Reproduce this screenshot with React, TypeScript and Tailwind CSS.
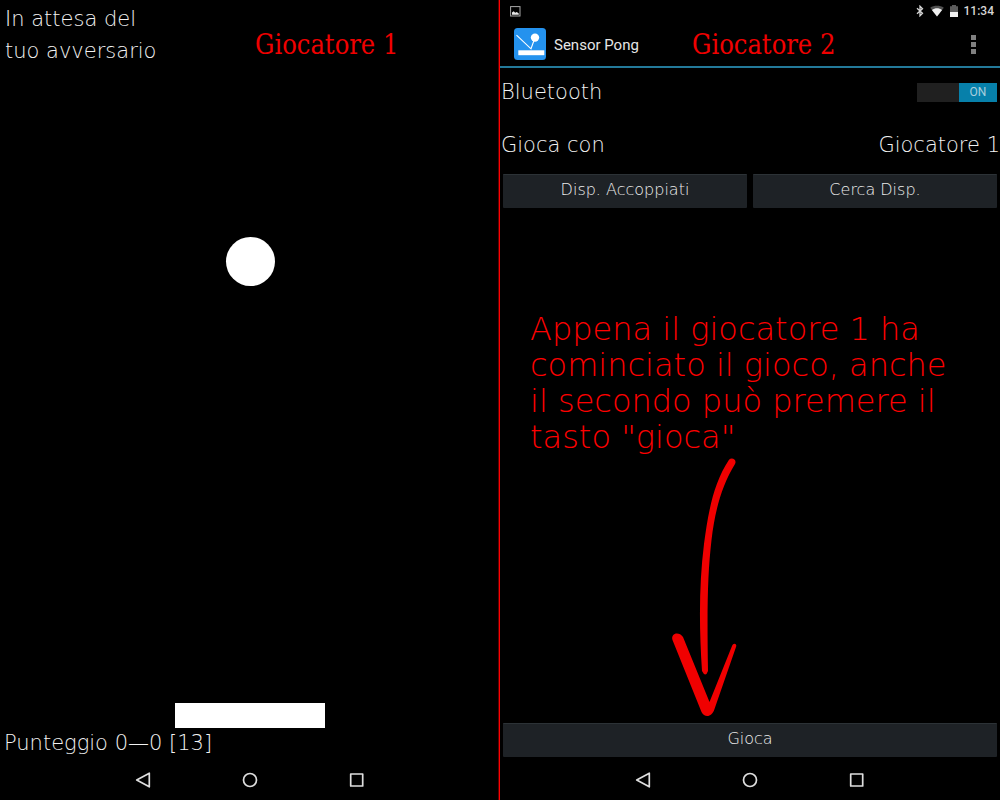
import { useState } from "react";

const hand = "font-['DejaVu_Sans',sans-serif] font-extralight";
const caption =
  "pointer-events-none absolute font-['DejaVu_Serif_Condensed','DejaVu_Serif',serif] font-stretch-condensed text-[27px] leading-8 text-[#f00000] whitespace-nowrap";

function NavBar() {
  return (
    <nav className="flex h-10 shrink-0 items-center justify-center gap-[83px] text-[#dedede]">
      <button type="button" aria-label="Indietro" className="size-6">
        <svg viewBox="0 0 24 24" className="size-6" fill="none" stroke="currentColor" strokeWidth="1.7" strokeLinejoin="round">
          <path d="M18.3 5.2v13.6L5.7 12z" />
        </svg>
      </button>
      <button type="button" aria-label="Home" className="size-6">
        <svg viewBox="0 0 24 24" className="size-6" fill="none" stroke="currentColor" strokeWidth="1.7">
          <circle cx="12" cy="12" r="6.5" />
        </svg>
      </button>
      <button type="button" aria-label="Recenti" className="size-6">
        <svg viewBox="0 0 24 24" className="size-6" fill="none" stroke="currentColor" strokeWidth="1.7" strokeLinejoin="round">
          <rect x="5.7" y="6" width="12" height="12" />
        </svg>
      </button>
    </nav>
  );
}

function PlayerOne() {
  return (
    <section className="relative flex min-h-screen flex-col border-r border-r-[#ff0000] shadow-[inset_-1px_0_0_#600000]">
      <p className={`${hand} pt-[3px] pl-[5px] text-[21px] leading-8`}>
        In attesa del
        <br />
        tuo avversario
      </p>
      <h2 className={`${caption} top-[29px] left-[255px]`}>Giocatore 1</h2>
      <div className="flex flex-1 flex-col items-center justify-between pt-[170px] pl-px">
        <div className="size-[49px] rounded-full bg-white" />
        <div className="h-[25px] w-[150px] bg-white" />
      </div>
      <p className={`${hand} h-8 pl-[4px] text-[21px] leading-[30px]`}>Punteggio 0—0 [13]</p>
      <NavBar />
    </section>
  );
}

function StatusBar() {
  return (
    <div className="flex h-[22px] items-center pr-[6px] pl-[10px] font-['Roboto',sans-serif] text-[12px] leading-5 font-medium text-[#d6d6d6]">
      <svg viewBox="0 0 11 11" className="mr-auto size-[11px]">
        <rect x="0.6" y="0.6" width="9.4" height="9.4" fill="none" stroke="#a8a8a8" strokeWidth="1" />
        <path d="M2 8.8V6.6l1.7-1.3 1.5 1.5L6.8 6l2 1.4v1.4z" fill="#e8e8e8" />
      </svg>
      <svg viewBox="0 0 8 12" className="mr-[6px] h-3 w-2" fill="none" stroke="#d6d6d6" strokeWidth="1.3">
        <path d="M1 3.3l5.5 5L4 10.8V1.2l2.5 2.5L1 8.7" />
      </svg>
      <svg viewBox="0 0 14 12" className="mr-[6px] h-3 w-[14px]">
        <path d="M7 11.5L.2 2.8C4 .2 10 .2 13.8 2.8z" fill="#505050" />
        <path d="M7 11.5L1.9 4.9C5 2.8 9 2.8 12.1 4.9z" fill="#f0f0f0" />
      </svg>
      <svg viewBox="0 0 8 12" className="mr-[6px] h-3 w-2">
        <path d="M0 1.3h2V0h4v1.3h2V7H0z" fill="#5c5c5c" />
        <path d="M0 7h8v5H0z" fill="#f0f0f0" />
      </svg>
      <span>11:34</span>
    </div>
  );
}

function ActionBar() {
  return (
    <header className="relative flex h-[46px] items-center border-b-2 border-[#23799a] pr-[15px] pl-[14px]">
      <svg viewBox="0 0 32 32" className="size-8">
        <rect width="32" height="32" rx="3.5" fill="#2492ee" />
        <path d="M2.5 7.2L17 20.8 20.5 11" fill="none" stroke="#fff" strokeWidth="1.1" />
        <circle cx="21" cy="9.6" r="4.2" fill="#fff" />
        <rect x="4.3" y="22.3" width="26" height="4.9" fill="#fff" />
      </svg>
      <h1 className="ml-2 pt-[2px] font-['Roboto',sans-serif] text-[15px] leading-6 text-[#e6e6e6]">Sensor Pong</h1>
      <h2 className={`${caption} top-[7px] left-[192px]`}>Giocatore 2</h2>
      <button type="button" aria-label="Menu" className="ml-auto flex h-8 w-6 flex-col items-center justify-center gap-[2px]">
        <span className="size-[5px] bg-[#808080]" />
        <span className="size-[5px] bg-[#808080]" />
        <span className="size-[5px] bg-[#808080]" />
      </button>
    </header>
  );
}

function DeviceButton({ children }: { children: string }) {
  return (
    <button
      type="button"
      className={`${hand} h-[34px] flex-1 rounded-[1px] border-t border-[#2c3236] bg-[#1e2226] pb-1 text-[16px] leading-6 text-[#ececec]`}
    >
      {children}
    </button>
  );
}

function PlayerTwo() {
  const [on, setOn] = useState(true);
  return (
    <section className="flex min-h-screen flex-col overflow-hidden">
      <StatusBar />
      <ActionBar />
      <label className="flex h-12 items-center justify-between pr-[3px] pl-px">
        <span className={`${hand} text-[21px] leading-8`}>Bluetooth</span>
        <input type="checkbox" role="switch" checked={on} onChange={() => setOn(!on)} className="peer sr-only" />
        <span className="flex h-[19px] w-20 bg-[#202020] peer-checked:justify-end">
          <span className="w-[38px] bg-[#0780aa] text-center font-['Roboto',sans-serif] text-[12px] leading-[19px] text-[#a9cfdd]">
            {on ? "ON" : "OFF"}
          </span>
        </span>
      </label>
      <div className={`${hand} flex h-[58px] items-center justify-between pl-px text-[21px] leading-8`}>
        <span>Gioca con</span>
        <span>Giocatore 1</span>
      </div>
      <div className="flex gap-[6px] px-[3px]">
        <DeviceButton>Disp. Accoppiati</DeviceButton>
        <DeviceButton>Cerca Disp.</DeviceButton>
      </div>
      <div className="flex flex-1 flex-col pt-[103px] pl-[30px] text-[#f00000]">
        <p className={`${hand} text-[32px] leading-9 whitespace-nowrap text-[#ff0000]`}>
          Appena il giocatore 1 ha
          <br />
          cominciato il gioco, anche
          <br />
          il secondo può premere il
          <br />
          tasto "gioca"
        </p>
        <svg viewBox="0 0 70 262" className="mt-px ml-[138px] h-[262px] w-[70px]" fill="currentColor">
          <path d="M61 3.8C64 .8 69.200 4 67 8C54 29 47 54 43.500 84C39.500 119 39 151 40 215Q37.500 222 34 215C31 170 31 128 36 88C40 58 45 28 61 3.800Z" />
          <path d="M4.500 184C2.500 177 11 175 15 181L41.500 246L64 190C65.500 186 69.500 188 68 191L46.500 253C44 261.500 36.500 262 33.500 256Z" />
        </svg>
      </div>
      <div className="flex px-[3px] pb-[3px]">
        <DeviceButton>Gioca</DeviceButton>
      </div>
      <NavBar />
    </section>
  );
}

export default function App() {
  return (
    <main className="grid min-h-screen grid-cols-2 bg-black text-[#f2f2f2]">
      <PlayerOne />
      <PlayerTwo />
    </main>
  );
}
